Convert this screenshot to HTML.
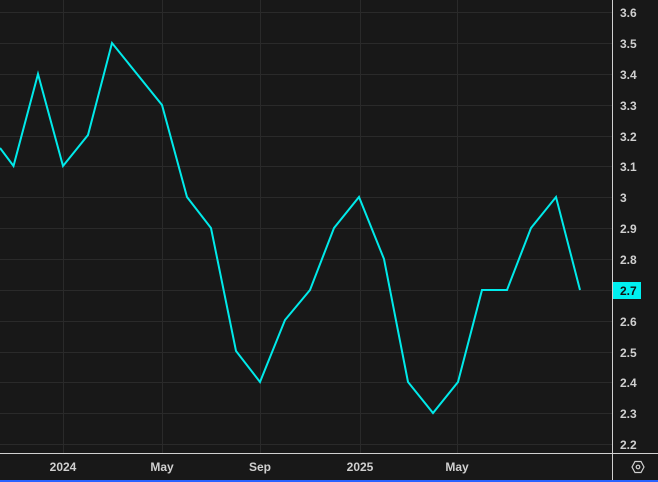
<!DOCTYPE html>
<html><head><style>
html,body{margin:0;padding:0;background:#181818;}
svg{display:block;}
text{font-family:"Liberation Sans",sans-serif;font-size:12px;fill:#d0d0d0;font-weight:bold;}
</style></head><body>
<svg width="658" height="482" viewBox="0 0 658 482">
<rect width="658" height="482" fill="#181818"/>
<g stroke="#2a2a2a" stroke-width="1">
<line x1="0" x2="612" y1="12.5" y2="12.5"/><line x1="0" x2="612" y1="43.5" y2="43.5"/>
<line x1="0" x2="612" y1="74.5" y2="74.5"/><line x1="0" x2="612" y1="105.5" y2="105.5"/>
<line x1="0" x2="612" y1="136.5" y2="136.5"/><line x1="0" x2="612" y1="166.5" y2="166.5"/>
<line x1="0" x2="612" y1="197.5" y2="197.5"/><line x1="0" x2="612" y1="228.5" y2="228.5"/>
<line x1="0" x2="612" y1="259.5" y2="259.5"/><line x1="0" x2="612" y1="290.5" y2="290.5"/>
<line x1="0" x2="612" y1="321.5" y2="321.5"/><line x1="0" x2="612" y1="352.5" y2="352.5"/>
<line x1="0" x2="612" y1="382.5" y2="382.5"/><line x1="0" x2="612" y1="413.5" y2="413.5"/>
<line x1="0" x2="612" y1="444.5" y2="444.5"/>
<line x1="63.5" x2="63.5" y1="0" y2="453"/><line x1="162.5" x2="162.5" y1="0" y2="453"/>
<line x1="260.5" x2="260.5" y1="0" y2="453"/><line x1="360.5" x2="360.5" y1="0" y2="453"/>
<line x1="457.5" x2="457.5" y1="0" y2="453"/>
</g>
<line x1="0" x2="658" y1="453.5" y2="453.5" stroke="#d0d0d0"/>
<line x1="612.5" x2="612.5" y1="0" y2="482" stroke="#d0d0d0"/>
<polyline fill="none" stroke="#00eaea" stroke-width="2" stroke-linejoin="miter" points="0,148 13.5,166 38,74 63,166 88,135 112,43 137,74 162,105 187,197 211,228 236,351 260,382 285,320 310,290 334,228 359,197 384,259 408,382 433,413 458,382 482,290 507,290 531,228 556,197 580,290"/>
<g>
<text x="620" y="17">3.6</text><text x="620" y="48">3.5</text><text x="620" y="79">3.4</text>
<text x="620" y="110">3.3</text><text x="620" y="141">3.2</text><text x="620" y="171">3.1</text>
<text x="620" y="202">3</text><text x="620" y="233">2.9</text><text x="620" y="264">2.8</text>
<text x="620" y="326">2.6</text><text x="620" y="357">2.5</text>
<text x="620" y="387">2.4</text><text x="620" y="418">2.3</text><text x="620" y="449">2.2</text>
</g>
<rect x="613" y="282" width="28" height="17" fill="#00f0f0"/>
<text x="620" y="295" style="fill:#111">2.7</text>
<text x="63" y="471" text-anchor="middle">2024</text>
<text x="162" y="471" text-anchor="middle">May</text>
<text x="260" y="471" text-anchor="middle">Sep</text>
<text x="360" y="471" text-anchor="middle">2025</text>
<text x="457" y="471" text-anchor="middle">May</text>
<polygon points="632,467 635,461.5 641,461.5 644,467 641,472.5 635,472.5" fill="none" stroke="#d0d0d0" stroke-width="1.2"/>
<circle cx="638" cy="467" r="1.8" fill="none" stroke="#d0d0d0" stroke-width="1.2"/>
<rect x="0" y="480" width="658" height="2" fill="#2962ff"/>
</svg>
</body></html>
